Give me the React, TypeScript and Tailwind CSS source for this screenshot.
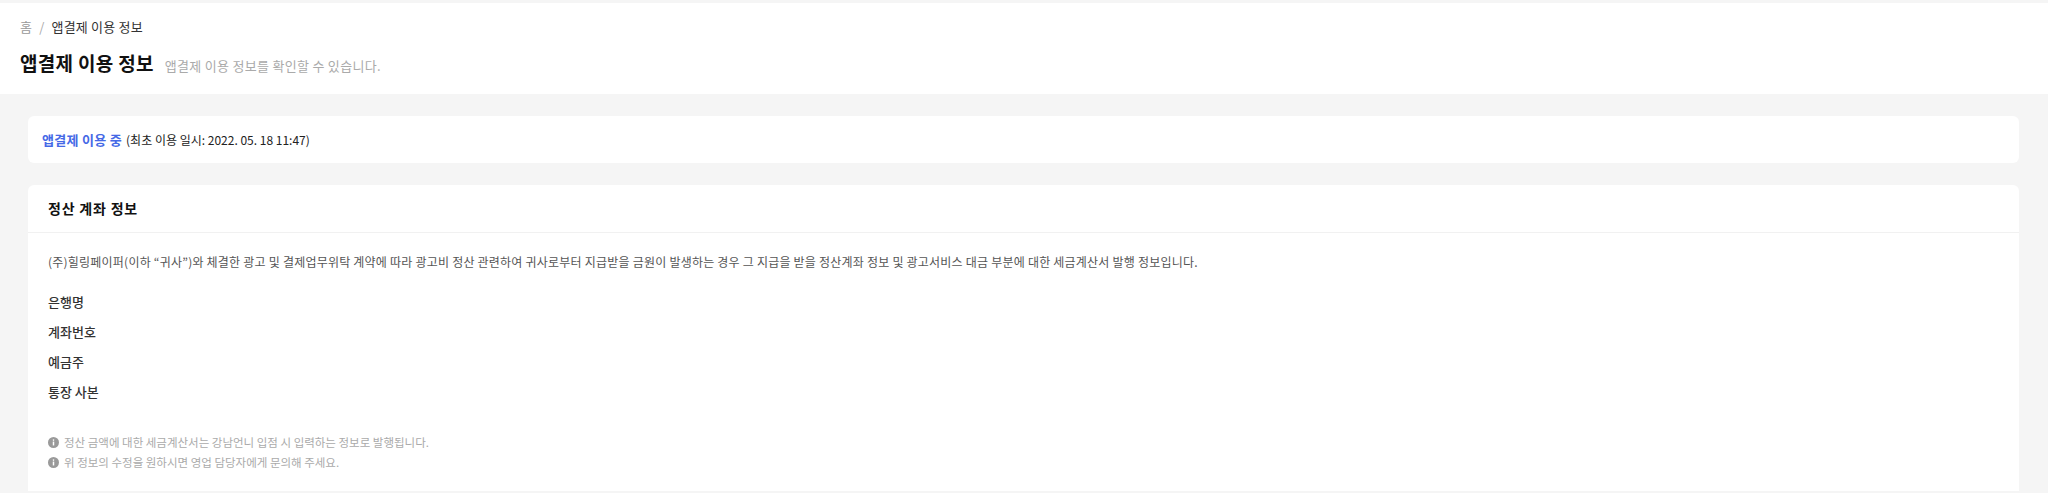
const FONT = { fontFamily: '"Malgun Gothic", "Noto Sans CJK KR", "Noto Sans", sans-serif' };

const FIELDS = ["은행명", "계좌번호", "예금주", "통장 사본"];

const NOTES = [
  "정산 금액에 대한 세금계산서는 강남언니 입점 시 입력하는 정보로 발행됩니다.",
  "위 정보의 수정을 원하시면 영업 담당자에게 문의해 주세요.",
];

function InfoIcon() {
  return (
    <svg width="11" height="11" viewBox="0 0 12 12" className="shrink-0">
      <circle cx="6" cy="6" r="6" fill="#9a9a9a" />
      <rect x="5.2" y="5" width="1.6" height="4.2" fill="#fff" />
      <circle cx="6" cy="3.4" r="0.9" fill="#fff" />
    </svg>
  );
}

export default function App() {
  return (
    <div className="min-h-[493px] bg-[#f5f5f5] pt-[3px]" style={FONT}>
      <header className="bg-white px-5 pt-[15px] pb-[17px]">
        <nav className="flex items-center gap-[7px] text-[13px] leading-[18px] tracking-[0.2px]">
          <span className="text-[#999]">홈</span>
          <span className="text-[#aaa]">/</span>
          <span className="text-[#333]">앱결제 이용 정보</span>
        </nav>
        <div className="mt-[13px] flex items-baseline gap-[11px]">
          <h1 className="text-[19px] leading-[28px] font-bold text-[#111] tracking-[0.3px]">앱결제 이용 정보</h1>
          <p className="text-[13px] leading-[18px] text-[#aaa] tracking-[0.3px]">앱결제 이용 정보를 확인할 수 있습니다.</p>
        </div>
      </header>

      <main className="flex flex-col gap-[22px] pl-[28px] pr-[29px] pt-[22px]">
        <section className="flex h-[47px] items-center rounded-md bg-white px-[14px]">
          <span className="text-[13px] font-semibold text-[#4569e6] tracking-[0.3px]">앱결제 이용 중</span>
          <span className="ml-[4px] text-[12px] text-[#222]">(최초 이용 일시: 2022. 05. 18 11:47)</span>
        </section>

        <section className="rounded-t-md bg-white">
          <div className="flex h-[48px] items-center border-b border-[#f1f1f1] px-5">
            <h2 className="text-[14px] font-bold text-[#111] tracking-[0.8px]">정산 계좌 정보</h2>
          </div>
          <div className="px-5 pt-[20px] pb-[19px]">
            <p className="text-[12px] leading-[18px] text-[#555] tracking-[0.22px]">
              (주)힐링페이퍼(이하 “귀사”)와 체결한 광고 및 결제업무위탁 계약에 따라 광고비 정산 관련하여 귀사로부터 지급받을 금원이 발생하는 경우 그 지급을 받을 정산계좌 정보 및 광고서비스 대금 부분에 대한 세금계산서 발행 정보입니다.
            </p>
            <ul className="mt-[22px] flex flex-col gap-[12px]">
              {FIELDS.map((f) => (
                <li key={f} className="text-[13px] leading-[18px] font-medium text-[#333]">{f}</li>
              ))}
            </ul>
            <ul className="mt-[31px] flex flex-col">
              {NOTES.map((n) => (
                <li key={n} className="flex items-center gap-[5px] text-[11.5px] leading-[20px] text-[#aaa]">
                  <InfoIcon />
                  <span>{n}</span>
                </li>
              ))}
            </ul>
          </div>
        </section>
      </main>
    </div>
  );
}
